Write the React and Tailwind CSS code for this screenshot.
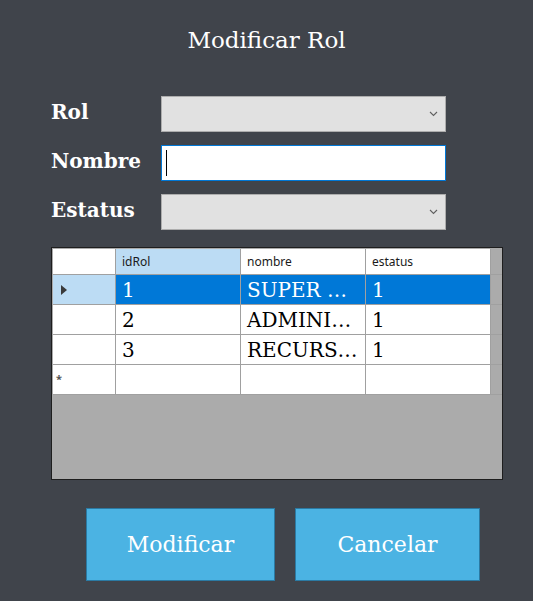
import React from 'react';

const serif = { fontFamily: '"DejaVu Serif", "Liberation Serif", serif' };
const sans = { fontFamily: '"Noto Sans", "Liberation Sans", sans-serif' };

const rows = [
  { id: '1', nombre: 'SUPER …', estatus: '1', selected: true },
  { id: '2', nombre: 'ADMINI…', estatus: '1' },
  { id: '3', nombre: 'RECURS…', estatus: '1' },
];

const Chevron = () => (
  <svg width="9" height="6" viewBox="0 0 9 6" className="mr-[7px]">
    <path d="M1 1l3.5 3.5L8 1" fill="none" stroke="#606060" strokeWidth="1.1" />
  </svg>
);

const Combo = () => (
  <div className="w-[285px] h-[36px] bg-[#e1e1e1] border border-[#adadad] flex items-center justify-end">
    <Chevron />
  </div>
);

const FieldRow = ({ label, children }) => (
  <div className="flex items-center">
    <div className="w-[110px] pl-[51px] box-content text-white text-[20px] font-bold -mt-[4px]" style={serif}>
      {label}
    </div>
    {children}
  </div>
);

const Cell = ({ children, selected }) => (
  <div
    className={`w-[125px] h-full border-r border-[#a0a0a0] pl-[6px] flex items-center text-[20px] ${
      selected ? 'bg-[#0078d7] text-white' : 'bg-white text-black'
    }`}
    style={serif}
  >
    {children}
  </div>
);

const HeadCell = ({ children, active }) => (
  <div
    className={`w-[125px] h-full border-r border-[#a0a0a0] pl-[6px] flex items-center text-[12px] text-[#1a1a1a] ${
      active ? 'bg-[#bcdcf4]' : 'bg-white'
    }`}
  >
    {children}
  </div>
);

export default function App() {
  return (
    <div className="w-[533px] h-[601px] bg-[#40444b] overflow-hidden">
      <div className="pt-[25px] text-center text-white text-[23px] leading-[30px]" style={serif}>
        Modificar Rol
      </div>

      <div className="mt-[41px] flex flex-col gap-[13px]">
        <FieldRow label="Rol">
          <Combo />
        </FieldRow>
        <FieldRow label="Nombre">
          <div className="w-[285px] h-[36px] bg-white border border-[#0078d7] flex items-center pl-[4px]">
            <div className="w-[1px] h-[26px] bg-black" />
          </div>
        </FieldRow>
        <FieldRow label="Estatus">
          <Combo />
        </FieldRow>
      </div>

      <div className="ml-[51px] mt-[17px] w-[452px] h-[233px] border border-[#1e1e1e] bg-[#ababab] pt-[1px] pl-[1px]">
        <div className="flex h-[26px] border-b border-[#a0a0a0]" style={sans}>
          <div className="w-[63px] h-full bg-white border-r border-[#a0a0a0]" />
          <HeadCell active>idRol</HeadCell>
          <HeadCell>nombre</HeadCell>
          <HeadCell>estatus</HeadCell>
        </div>
        {rows.map((r) => (
          <div key={r.id} className="flex h-[30px] border-b border-[#a0a0a0]">
            <div
              className={`w-[63px] h-full border-r border-[#a0a0a0] flex items-center pl-[8px] ${
                r.selected ? 'bg-[#bcdcf4]' : 'bg-white'
              }`}
            >
              {r.selected && (
                <svg width="6" height="10" viewBox="0 0 6 10">
                  <path d="M0 0l6 5-6 5z" fill="#3a3a3a" />
                </svg>
              )}
            </div>
            <Cell selected={r.selected}>{r.id}</Cell>
            <Cell selected={r.selected}>{r.nombre}</Cell>
            <Cell selected={r.selected}>{r.estatus}</Cell>
          </div>
        ))}
        <div className="flex h-[30px] border-b border-[#a0a0a0]">
          <div className="w-[63px] h-full bg-white border-r border-[#a0a0a0] flex items-center pl-[3px]">
            <span className="text-[11px] text-[#555] font-bold" style={sans}>*</span>
          </div>
          <Cell />
          <Cell />
          <Cell />
        </div>
      </div>

      <div className="mt-[28px] pl-[86px] flex gap-[20px]">
        <button
          className="w-[189px] h-[73px] bg-[#4bb3e3] border border-[#2b7aa3] text-white text-[22px]"
          style={serif}
        >
          Modificar
        </button>
        <button
          className="w-[185px] h-[73px] bg-[#4bb3e3] border border-[#2b7aa3] text-white text-[22px]"
          style={serif}
        >
          Cancelar
        </button>
      </div>
    </div>
  );
}
